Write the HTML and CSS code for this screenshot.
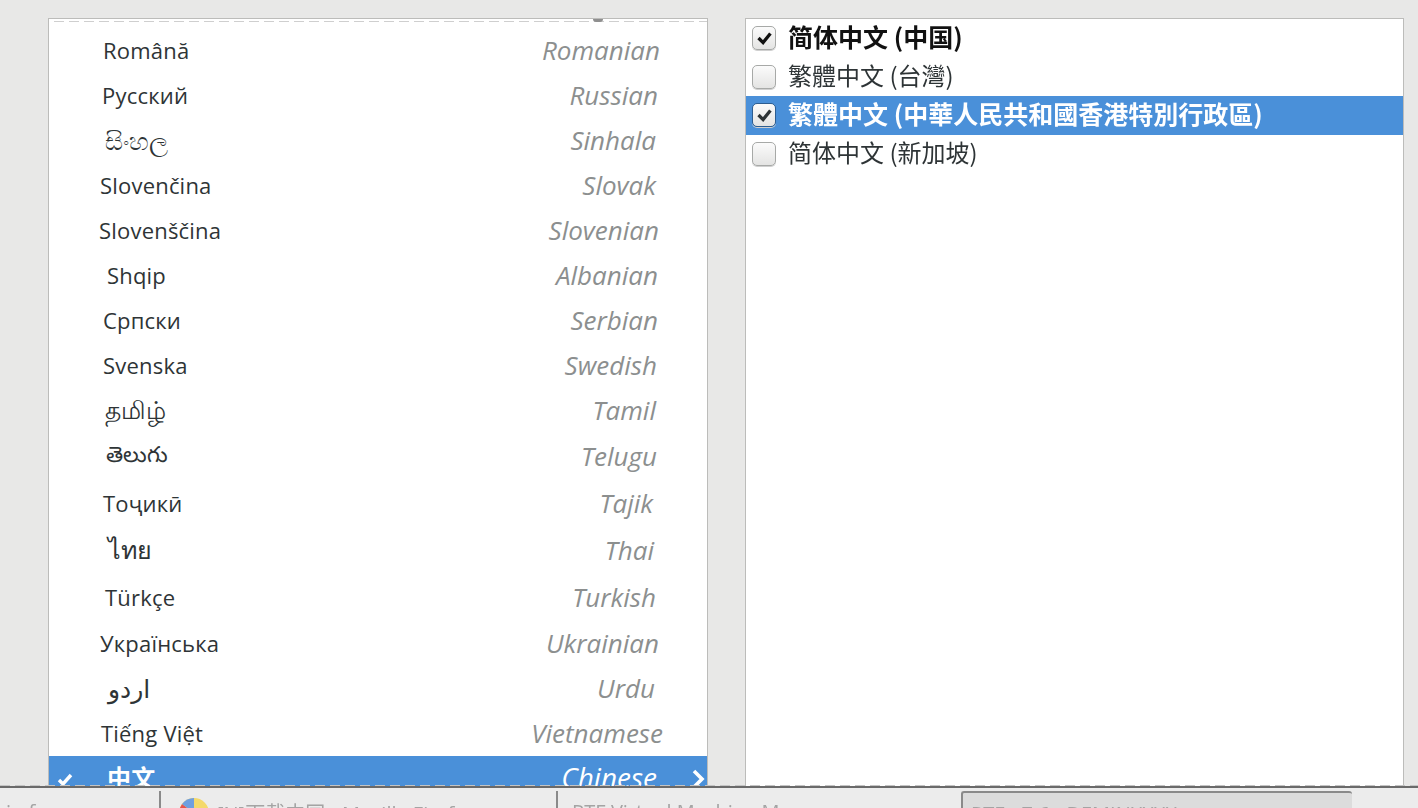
FILE: index.html
```html
<!DOCTYPE html>
<html>

<head>
  <meta charset="utf-8">
  <title>Language selection</title>
  <link rel="stylesheet" href="styles.css">
</head>

<body>
  <div class="screen">
    <div class="spoke">
      <div class="panel lang-panel">
        <div class="scroll-mark"></div>
        <ul class="lang-list">
          <li class="lang"><span class="native">Română</span><span class="english">Romanian</span></li>
          <li class="lang"><span class="native">Русский</span><span class="english">Russian</span></li>
          <li class="lang"><span class="native big">සිංහල</span><span class="english">Sinhala</span></li>
          <li class="lang"><span class="native">Slovenčina</span><span class="english">Slovak</span></li>
          <li class="lang"><span class="native">Slovenščina</span><span class="english">Slovenian</span></li>
          <li class="lang"><span class="native">Shqip</span><span class="english">Albanian</span></li>
          <li class="lang"><span class="native">Српски</span><span class="english">Serbian</span></li>
          <li class="lang"><span class="native">Svenska</span><span class="english">Swedish</span></li>
          <li class="lang"><span class="native big">தமிழ்</span><span class="english">Tamil</span></li>
          <li class="lang tall"><span class="native">తెలుగు</span><span class="english">Telugu</span></li>
          <li class="lang tall"><span class="native">Тоҷикӣ</span><span class="english">Tajik</span></li>
          <li class="lang tall"><span class="native big">ไทย</span><span class="english">Thai</span></li>
          <li class="lang tall"><span class="native">Türkçe</span><span class="english">Turkish</span></li>
          <li class="lang"><span class="native">Українська</span><span class="english">Ukrainian</span></li>
          <li class="lang"><span class="native big">اردو</span><span class="english">Urdu</span></li>
          <li class="lang"><span class="native">Tiếng Việt</span><span class="english">Vietnamese</span></li>
          <li class="lang selected">
            <svg class="tick" viewBox="0 0 16 14"><path d="M2 8l4 4 8-9" /></svg>
            <span class="native">中文</span><span class="english">Chinese</span>
            <svg class="chevron" viewBox="0 0 14 20"><path d="M3 2l8 8-8 8" /></svg>
          </li>
        </ul>
      </div>

      <div class="panel locale-panel">
        <ul class="locale-list">
          <li class="locale bold">
            <span class="box"><svg viewBox="0 0 24 24"><path d="M6 12l5 5 8-10" /></svg></span>
            <span class="locale-name">简体中文 (中国)</span>
          </li>
          <li class="locale">
            <span class="box"></span>
            <span class="locale-name">繁體中文 (台灣)</span>
          </li>
          <li class="locale bold selected">
            <span class="box"><svg viewBox="0 0 24 24"><path d="M6 12l5 5 8-10" /></svg></span>
            <span class="locale-name">繁體中文 (中華人民共和國香港特別行政區)</span>
          </li>
          <li class="locale">
            <span class="box"></span>
            <span class="locale-name">简体中文 (新加坡)</span>
          </li>
        </ul>
      </div>
    </div>

    <div class="seam"></div>

    <div class="taskbar">
      <div class="task first">in fo</div>
      <div class="task">
        <svg class="task-icon" viewBox="0 0 30 30">
          <circle cx="15" cy="15" r="15" fill="#f4d96b" />
          <path d="M15 15L3 6A15 15 0 0 0 0 15V30H15z" fill="#e8554e" />
          <path d="M15 15L3 6A15 15 0 0 1 15 0z" fill="#6f9fe0" />
        </svg>
        [N]下载中国 - Mozilla Firefox
      </div>
      <div class="task">RTF Virtual Machine Manager</div>
      <div class="task active">RTF - 7.6 - DEMINXXXX</div>
    </div>
  </div>
</body>

</html>
```
FILE: styles.css
```css
html,
body {
  margin: 0;
  padding: 0;
  background-color: #e8e8e7;
}

ul {
  list-style: none;
  margin: 0;
  padding: 0;
}

.screen {
  position: relative;
  width: 1418px;
  height: 808px;
  overflow: hidden;
  display: flex;
  flex-direction: column;
  font-family: "Open Sans", "Noto Sans", "DejaVu Sans", "Noto Sans CJK SC", sans-serif;
  filter: blur(0.6px);
}

.spoke {
  height: 770px;
  flex: none;
  padding: 18px 14px 0 48px;
  display: flex;
  gap: 37px;
  overflow: hidden;
}

.panel {
  position: relative;
  width: 660px;
  height: 800px;
  box-sizing: border-box;
  background-color: #fff;
  border: 1px solid #bcbcba;
}

/* dashed edge left over at the top of the list */
.lang-panel::before {
  content: "";
  position: absolute;
  top: 2px;
  left: 5px;
  right: 0;
  height: 1px;
  background: repeating-linear-gradient(90deg, #cfcfcf 0 10px, transparent 10px 15px);
}

.scroll-mark {
  position: absolute;
  top: 0;
  left: 544px;
  width: 10px;
  height: 3px;
  background-color: #8f8f8f;
  border-radius: 0 0 5px 5px;
}

.lang-list {
  padding-top: 9px;
}

.lang {
  position: relative;
  height: 45px;
  box-sizing: border-box;
  display: flex;
  align-items: center;
  justify-content: space-between;
  padding: 0 49px 2px 54px;
}

.lang.tall {
  height: 47px;
}

/* the columns don't line up exactly from row to row */
.lang:nth-child(1) { padding-right: 47px; }
.lang:nth-child(2) { padding-left: 53px; }
.lang:nth-child(3) { padding-left: 56px; padding-right: 51px; }
.lang:nth-child(4) { padding-left: 51px; padding-right: 51px; }
.lang:nth-child(5) { padding-left: 50px; padding-right: 48px; }
.lang:nth-child(6) { padding-left: 58px; }
.lang:nth-child(8) { padding-right: 50px; }
.lang:nth-child(9) { padding-left: 56px; padding-right: 51px; }
.lang:nth-child(10) { padding-left: 57px; padding-right: 50px; }
.lang:nth-child(11) { padding-right: 54px; }
.lang:nth-child(12) { padding-left: 59px; padding-right: 53px; }
.lang:nth-child(13) { padding-left: 56px; padding-right: 51px; }
.lang:nth-child(14) { padding-left: 51px; padding-right: 48px; }
.lang:nth-child(15) { padding-left: 59px; padding-right: 52px; }
.lang:nth-child(16) { padding-left: 52px; padding-right: 44px; }
.lang:nth-child(17) { padding-left: 58px; padding-right: 50px; padding-bottom: 4px; }

.native {
  font-size: 22px;
  letter-spacing: 0.2px;
  color: #2e3436;
}

.native.big {
  font-size: 25px;
}

.english {
  font-size: 26px;
  font-style: italic;
  color: #8c8f8f;
}

.lang.selected {
  background-color: #4a90d9;
}

.lang.selected .native {
  color: #fff;
  font-size: 24px;
  font-weight: bold;
}

.lang.selected .english {
  color: #fff;
  font-size: 28px;
}

.tick {
  position: absolute;
  left: 8px;
  top: 16px;
  width: 16px;
  height: 14px;
  fill: none;
  stroke: #fff;
  stroke-width: 3.4;
}

.chevron {
  position: absolute;
  right: 2px;
  top: 13px;
  width: 14px;
  height: 20px;
  fill: none;
  stroke: #fff;
  stroke-width: 3.6;
}

.locale-panel {
  width: 659px;
}

.locale {
  height: 38.5px;
  display: flex;
  align-items: center;
  gap: 12px;
  padding-left: 6px;
  font-size: 24px;
  color: #2e3436;
  font-family: "Noto Sans CJK TC", "Noto Sans CJK SC", sans-serif;
  white-space: nowrap;
}

.locale-name {
  margin-bottom: 4px;
}

.locale.bold {
  font-weight: bold;
  font-size: 25px;
  color: #111;
}

.locale.selected {
  background-color: #4a90d9;
  color: #fff;
}

.box {
  flex: none;
  width: 24px;
  height: 24px;
  box-sizing: border-box;
  border: 1px solid #a7a9a7;
  border-radius: 5px;
  background: linear-gradient(#fbfbfb, #e4e4e3);
  box-shadow: 0 1px 0 #d0d0d0;
}

.locale.selected .box {
  border-color: #2d5d90;
}

.box svg {
  display: block;
  width: 22px;
  height: 22px;
  fill: none;
  stroke: #111;
  stroke-width: 3.6;
}

.locale.selected .box svg {
  stroke: #2e3436;
}

.seam {
  position: absolute;
  left: 0;
  right: 0;
  top: 785px;
  height: 1px;
  background: repeating-linear-gradient(90deg, #c4c4c4 0 10px, transparent 10px 15px);
}

.taskbar {
  position: absolute;
  left: 0;
  right: 0;
  top: 786px;
  height: 22px;
  box-sizing: border-box;
  border-top: 2px solid #6a6a6a;
  background-color: #ececec;
  display: flex;
  overflow: hidden;
  color: #a4a4a4;
  font-size: 20px;
  white-space: nowrap;
}

.task {
  width: 397px;
  flex: none;
  box-sizing: border-box;
  margin-top: 3px;
  padding: 7px 0 0 14px;
  border-left: 2px solid #8a8a8a;
  display: flex;
  gap: 8px;
}

.task.first {
  width: 159px;
  padding-left: 6px;
  border-left: 0;
}

.task-icon {
  flex: none;
  width: 30px;
  height: 30px;
  margin: 0 0 0 4px;
}

.task.active {
  width: 391px;
  margin-left: 8px;
  padding-left: 8px;
  background-color: #dcdcdc;
  border: 2px solid #8a8a8a;
  border-bottom: 0;
  border-right: 0;
  border-radius: 3px 3px 0 0;
}
```
